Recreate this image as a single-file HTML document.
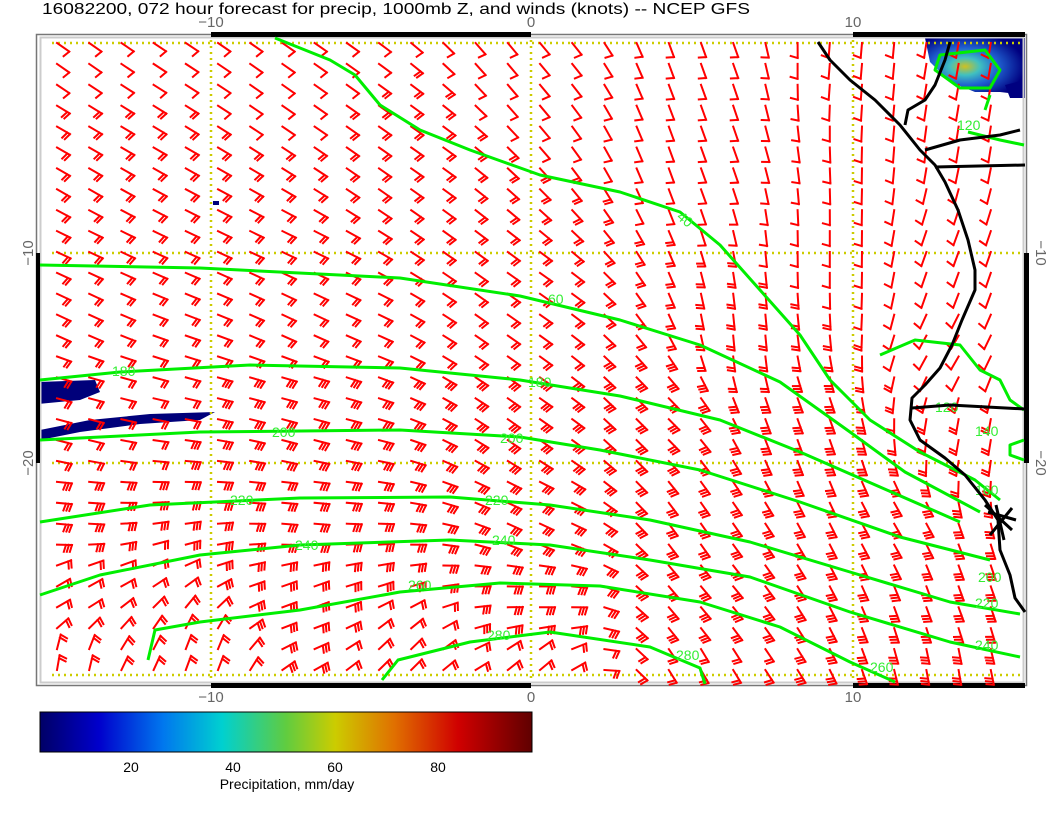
<!DOCTYPE html>
<html><head><meta charset="utf-8"><style>
html,body{margin:0;padding:0;background:#fff}
body{width:1056px;height:816px;overflow:hidden;position:relative;font-family:"Liberation Sans",sans-serif}
svg{position:absolute;left:0;top:0}
</style></head><body>
<svg id="s" width="1056" height="816" viewBox="0 0 1056 816" xmlns="http://www.w3.org/2000/svg">
<defs>
<linearGradient id="cb" x1="0" x2="1" y1="0" y2="0">
<stop offset="0" stop-color="#000066"/><stop offset="0.12" stop-color="#0000cc"/><stop offset="0.25" stop-color="#0077ee"/><stop offset="0.37" stop-color="#00d0d0"/><stop offset="0.5" stop-color="#60cc40"/><stop offset="0.6" stop-color="#cccc00"/><stop offset="0.72" stop-color="#e07000"/><stop offset="0.85" stop-color="#d00000"/><stop offset="1" stop-color="#600000"/>
</linearGradient>
<radialGradient id="pg" cx="0.4" cy="0.5" r="0.6"><stop offset="0" stop-color="#d0c020"/><stop offset="0.25" stop-color="#40c0c0"/><stop offset="0.55" stop-color="#2060d0"/><stop offset="1" stop-color="#000080"/></radialGradient>
</defs>
<text x="42" y="14" font-size="16" fill="#000" textLength="708" lengthAdjust="spacingAndGlyphs">16082200, 072 hour forecast for precip, 1000mb Z, and winds (knots) -- NCEP GFS</text>
<g font-size="15" fill="#666" text-anchor="middle">
<text x="211" y="27">−10</text><text x="531" y="27">0</text><text x="853" y="27">10</text>
<text x="211" y="702">−10</text><text x="531" y="702">0</text><text x="853" y="702">10</text>
<text transform="translate(33,253) rotate(-90)">−10</text>
<text transform="translate(33,463) rotate(-90)">−20</text>
<text transform="translate(1036,253) rotate(90)">−10</text>
<text transform="translate(1036,463) rotate(90)">−20</text>
</g>
<!-- precip -->
<path d="M925 38 L1025 38 L1025 95 L1000 92 L975 92 L950 82 L930 62 Z" fill="url(#pg)"/>
<path d="M1005 85 L1025 80 L1025 98 L1010 98Z" fill="#000080"/>
<path d="M38 382 L95 380 L100 392 L80 400 L38 404Z" fill="#00007a"/>
<path d="M40 430 L90 420 L150 414 L215 412 L200 420 L140 424 L80 432 L40 440Z" fill="#00007a"/>
<rect x="213" y="201" width="6" height="4" fill="#00007a"/>
<!-- frame -->
<rect x="36.5" y="34.5" width="990" height="651" fill="none" stroke="#777" stroke-width="1.5"/>
<rect x="40.5" y="37.5" width="983" height="645" fill="none" stroke="#ccc" stroke-width="2"/>
<g fill="#000">
<rect x="211" y="32" width="320" height="5"/><rect x="853" y="32" width="172" height="5"/>
<rect x="211" y="683" width="320" height="5"/><rect x="853" y="683" width="172" height="5"/>
<rect x="36" y="253" width="4" height="210"/><rect x="1024" y="253" width="5" height="210"/>
</g>
<g stroke="#cccc00" stroke-width="2.5" stroke-dasharray="2 4" fill="none">
<path d="M52 43H1024M52 253H1024M52 463H1024M52 675H1024M211 40V682M531 40V682M853 40V682"/>
</g>
<g id="barbs" stroke="#ff0000" stroke-width="2" fill="none" stroke-linecap="square"></g>
<!-- contours -->
<g stroke="#00ee00" stroke-width="3" fill="none" stroke-linejoin="round">
<path d="M275 38 L330 60 L355 75 L380 105 L420 130 L470 150 L540 175 L620 192 L680 212 L720 245 L760 290 L800 335 L830 380 L870 420 L920 452 L975 480 L1000 500"/>
<path d="M40 265 L200 268 L400 278 L520 296 L620 320 L700 345 L780 382 L850 432 L905 472 L980 512"/>
<path d="M40 380 L120 372 L250 365 L400 368 L520 380 L620 396 L720 420 L800 452 L880 487 L960 522"/>
<path d="M40 440 L200 432 L400 430 L520 437 L600 450 L700 470 L800 502 L900 537 L990 560"/>
<path d="M40 522 L150 505 L300 498 L450 497 L550 505 L650 520 L750 542 L850 572 L950 602 L1020 614"/>
<path d="M40 595 L100 575 L200 555 L300 545 L450 540 L550 545 L650 560 L750 577 L850 612 L950 642 L1020 657"/>
<path d="M148 660 L155 630 L200 622 L300 610 L400 592 L500 583 L600 586 L700 602 L780 627 L850 662 L895 682"/>
<path d="M382 680 L398 660 L470 642 L550 632 L650 647 L700 668 L705 684"/>
<path d="M880 355 L915 340 L960 345 L980 370 L1000 380 L1010 400 L1024 410"/>
<path d="M940 55 L985 50 L1000 70 L990 88 L960 88 L935 70Z"/>
<path d="M968 132 L1000 140 L1024 145 M990 95 L985 110"/>
<path d="M1024 440 L1010 445 L1010 455 L1024 460"/>
</g>
<g fill="#33ee33" font-size="14">
<text x="676" y="218" transform="rotate(40 676 218)">40</text>
<text x="548" y="304">60</text><text x="112" y="376">180</text><text x="528" y="387">180</text>
<text x="272" y="437">200</text><text x="500" y="443">200</text>
<text x="230" y="505">220</text><text x="485" y="505">220</text>
<text x="295" y="550">240</text><text x="492" y="545">240</text>
<text x="408" y="590">260</text><text x="487" y="640">280</text><text x="676" y="660">280</text>
<text x="957" y="130">120</text><text x="975" y="495">160</text><text x="978" y="582">200</text>
<text x="975" y="608">220</text><text x="975" y="650">240</text><text x="870" y="672">260</text>
<text x="935" y="412">120</text><text x="975" y="436">140</text>
</g>
<!-- coast -->
<g stroke="#000" stroke-width="3" fill="none" stroke-linejoin="round">
<path d="M818 42 L830 60 L850 80 L875 100 L900 125 L920 150 L935 165 L945 182 L958 210 L968 240 L975 270 L975 290 L962 320 L952 345 L940 368 L925 385 L912 398 L910 420 L920 440 L945 458 L965 475 L985 500 L998 520 L1000 550 L1010 575 L1015 598 L1025 612"/>
<path d="M935 167 L1025 165 M912 408 L950 405 L1025 409 M905 125 L908 110 L925 100 L935 85 L945 60 L950 42 M925 150 L960 140 L1000 135 L1020 130"/>
<path d="M985 505 L1012 530 M988 512 L1016 520 M996 505 L1004 540 M990 535 L1012 508"/>
</g>
<!-- colorbar -->
<rect x="40" y="712" width="492" height="40" fill="url(#cb)" stroke="#000" stroke-width="1"/>
<g font-size="14" fill="#000" text-anchor="middle">
<text x="131" y="772">20</text><text x="233" y="772">40</text><text x="335" y="772">60</text><text x="438" y="772">80</text>
<text x="287" y="789">Precipitation, mm/day</text>
</g>
</svg>
<script>
var cp=[[60,50,35,1],[300,50,35,1],[530,50,50,1],[700,50,70,1],[850,60,95,1],[960,70,100,1],
[60,150,30,2],[400,150,35,2],[700,150,70,1],[830,250,90,1],[950,250,110,1],
[60,300,25,2],[300,300,25,2],[530,300,35,2],[750,330,85,2],[950,350,120,1],
[60,420,15,2],[300,420,15,3],[530,420,35,3],[650,420,45,3],[800,420,70,3],[960,440,100,2],
[60,520,5,3],[300,520,5,3],[530,520,25,3],[700,520,55,3],[900,520,60,3],
[60,600,-30,2],[300,600,-20,3],[530,600,0,3],[700,600,50,3],[950,600,70,3],
[60,670,-80,2],[200,670,-70,2],[400,670,-45,2],[530,670,-40,2],[700,670,60,2],[950,670,80,3]];
var out="";
for(var r=0;r<31;r++){for(var c=0;c<30;c++){
var x=57+c*32.2,y=43+r*20.9;if(x>1012)continue;
var sx=0,sy=0,sn=0,sw=0;
for(var i=0;i<cp.length;i++){var dx=x-cp[i][0],dy=y-cp[i][1];var w=1/Math.pow(dx*dx+dy*dy+50,1.5);
var a=cp[i][2]*Math.PI/180;sx+=w*Math.cos(a);sy+=w*Math.sin(a);sn+=w*cp[i][3];sw+=w;}
var L=Math.hypot(sx,sy),ux=sx/L,uy=sy/L,n=Math.round(sn/sw);
var ex=x+15*ux,ey=y+15*uy,px=-uy,py=ux;
var d="M"+x.toFixed(1)+" "+y.toFixed(1)+"L"+ex.toFixed(1)+" "+ey.toFixed(1);
for(var k=0;k<n;k++){var bx=ex-k*3*ux,by=ey-k*3*uy;
d+="M"+bx.toFixed(1)+" "+by.toFixed(1)+"l"+(7*px-2*ux).toFixed(1)+" "+(7*py-2*uy).toFixed(1);}
out+='<path d="'+d+'"/>';}}
document.getElementById("barbs").innerHTML=out;
</script>
</body></html>
